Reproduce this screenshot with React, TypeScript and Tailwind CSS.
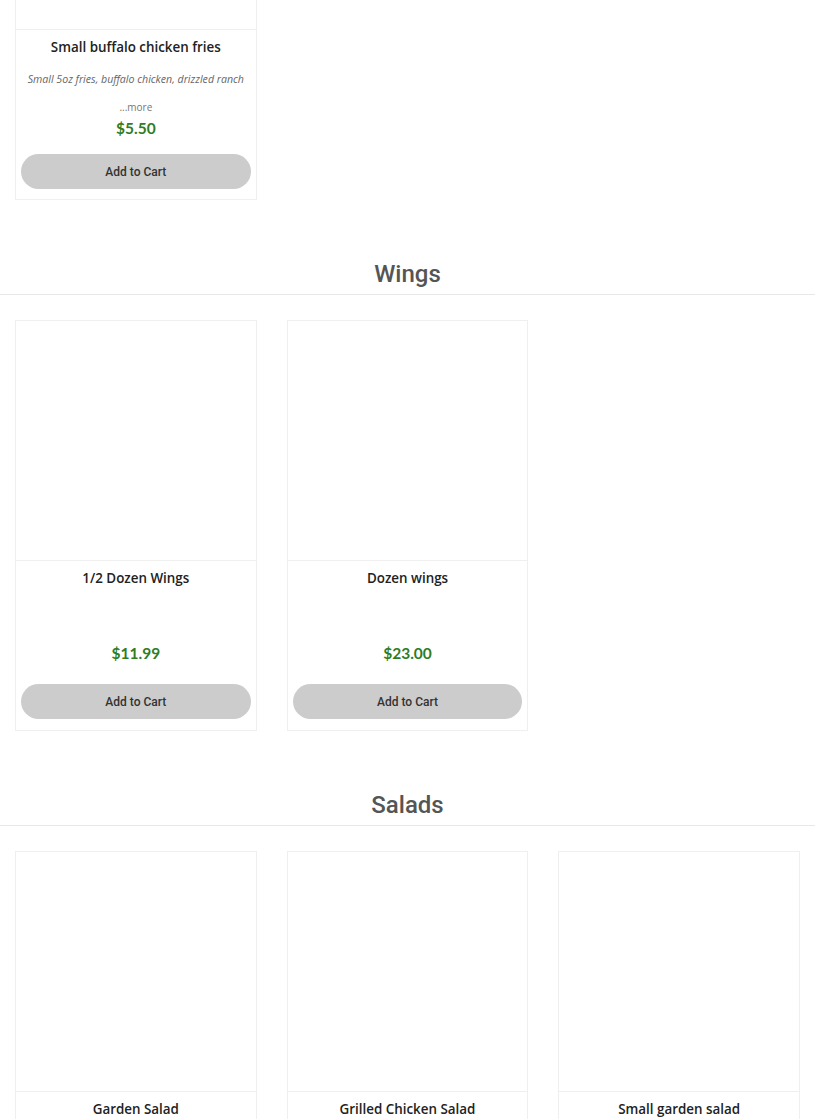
type Item = {
	name: string
	description?: string
	price?: string
}

const fries: Item[] = [
	{
		name: 'Small buffalo chicken fries',
		description: 'Small 5oz fries, buffalo chicken, drizzled ranch',
		price: '$5.50',
	},
]

const wings: Item[] = [
	{ name: '1/2 Dozen Wings', price: '$11.99' },
	{ name: 'Dozen wings', price: '$23.00' },
]

const salads: Item[] = [
	{ name: 'Garden Salad' },
	{ name: 'Grilled Chicken Salad' },
	{ name: 'Small garden salad' },
]

const ItemCard = ({ item }: { item: Item }) => (
	<div className="flex flex-col border border-[#efefef] bg-white">
		<div className="h-[240px] border-b border-[#efefef]" />
		<div className="flex flex-col items-center px-[5px] pt-[8px] pb-[10px] text-center">
			<p className="font-['Open_Sans',sans-serif] text-[13.4px] leading-[18px] font-semibold text-[#222]">
				{item.name}
			</p>
			{item.description ? (
				<>
					<p className="mt-[13px] font-['Open_Sans',sans-serif] text-[10.6px] leading-[20px] italic text-[#666]">
						{item.description}
					</p>
					<p className="mt-[8px] font-['Open_Sans',sans-serif] text-[10px] leading-[20px] text-[#777]">...more</p>
					<p className="font-['Lato',sans-serif] text-[15.5px] leading-[22px] font-bold text-[#2e7d23]">
						{item.price}
					</p>
					<button className="mt-[15px] h-[35px] w-full rounded-full bg-[#cccccc] font-['Roboto',sans-serif] text-[12px] font-medium text-[#333]">
						Add to Cart
					</button>
				</>
			) : item.price ? (
				<>
					<div className="h-[55px]" />
					<p className="font-['Lato',sans-serif] text-[15.5px] leading-[22px] font-bold text-[#2e7d23]">
						{item.price}
					</p>
					<button className="mt-[20px] mb-[1px] h-[35px] w-full rounded-full bg-[#cccccc] font-['Roboto',sans-serif] text-[12px] font-medium text-[#333]">
						Add to Cart
					</button>
				</>
			) : null}
		</div>
	</div>
)

const Grid = ({ items }: { items: Item[] }) => (
	<div className="grid grid-cols-3 gap-[30px] px-[15px]">
		{items.map((item) => (
			<ItemCard key={item.name} item={item} />
		))}
	</div>
)

const Section = ({ title, items }: { title: string; items: Item[] }) => (
	<section className="mt-[58px]">
		<h2 className="border-b border-[#e8e8e8] pb-[5px] pt-[1px] text-center font-['Roboto',sans-serif] text-[24px] leading-[30px] font-medium text-[#555]">
			{title}
		</h2>
		<div className="mt-[25px]">
			<Grid items={items} />
		</div>
	</section>
)

export default function App() {
	return (
		<div className="h-[1119px] w-[815px] overflow-hidden bg-white">
			<div className="-mt-[211px]">
				<Grid items={fries} />
			</div>
			<Section title="Wings" items={wings} />
			<Section title="Salads" items={salads} />
		</div>
	)
}
